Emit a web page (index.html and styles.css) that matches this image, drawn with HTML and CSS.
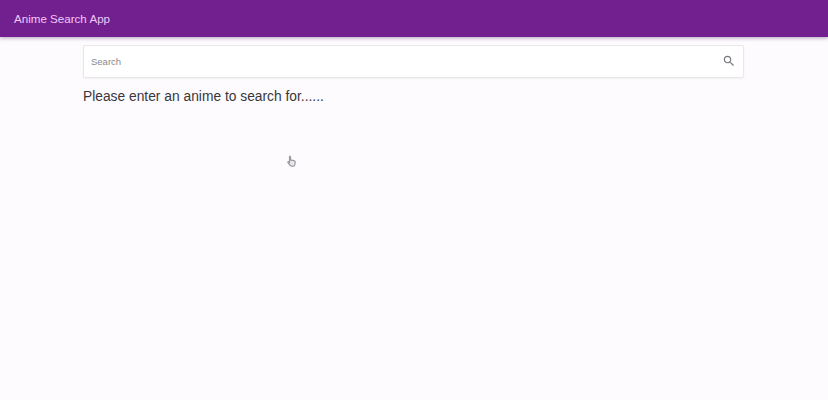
FILE: index.html
```html
<!DOCTYPE html>
<html lang="en">
<head>
  <meta charset="UTF-8" />
  <title>Anime Search App</title>
  <link rel="stylesheet" href="styles.css">
</head>
<body>

  <header class="app-bar">
    <div class="app-title">Anime Search App</div>
  </header>

  <main class="content">
    <div class="search-box">
      <span class="search-placeholder">Search</span>
      <svg class="search-icon" viewBox="0 0 24 24" width="14" height="14">
        <path d="M15.5 14h-.79l-.28-.27C15.41 12.59 16 11.11 16 9.5 16 5.91 13.09 3 9.500 3S3 5.910 3 9.500 5.910 16 9.500 16c1.610 0 3.090-.59 4.230-1.570l.27.28v.79l5 4.990L20.490 19l-4.990-5zm-6 0C7.010 14 5 11.990 5 9.500S7.010 5 9.500 5 14 7.010 14 9.500 11.990 14 9.500 14z"/>
      </svg>
    </div>
    <p class="message">Please enter an anime to search for......</p>
  </main>

  <!-- mouse pointer caught in the recording -->
  <svg class="cursor" viewBox="0 0 10 13" width="10" height="13">
    <path d="M2.500 1.200c.7 0 1 .5 1 1.100v2.600l3.400.8c.9.2 1.400.8 1.300 1.600l-.4 2.400c-.1.9-.7 1.500-1.600 1.500H4.600c-.6 0-1-.3-1.400-.8L1 7.600c-.4-.6.400-1.200 1-.7l.5.5V2.300c0-.6.300-1.100 1-1.100z" fill="#e8e6ea" stroke="#9a989c" stroke-width="1.200"/>
  </svg>

</body>
</html>
```

FILE: styles.css
```css
:root {
  --purple: #72208f;
  --bg: #fdfbfe;
  --text-main: #38373b;
  --text-sub: #8a888c;
  --border: #e9e7ea;
}

body {
  margin: 0;
  height: 400px;
  overflow: hidden;
  font-family: "Liberation Sans", Arial, sans-serif;
  background-color: var(--bg);
  color: var(--text-main);
}

.app-bar {
  height: 36px;
  display: flex;
  align-items: center;
  padding: 0 14px 1px;
  background-color: var(--purple);
  box-shadow: 0 1px 4px rgba(70, 20, 90, 0.4);
}

.app-title {
  font-size: 11.6px;
  color: #f0c8f8;
}

.content {
  padding: 8px 84px 0 83px;
}

.search-box {
  height: 30px;
  display: flex;
  align-items: center;
  justify-content: space-between;
  padding: 0 7px 1px 7px;
  background-color: #fff;
  border: 1px solid var(--border);
  border-radius: 2px;
  box-shadow: 0 1px 2px rgba(0, 0, 0, 0.05);
}

.search-placeholder {
  font-size: 9.5px;
  color: var(--text-sub);
}

.search-icon {
  fill: #77757a;
}

.message {
  margin: 10px 0 0;
  font-size: 13.8px;
  line-height: 17px;
}

.cursor {
  position: absolute;
  left: 287px;
  top: 155px;
}
```
